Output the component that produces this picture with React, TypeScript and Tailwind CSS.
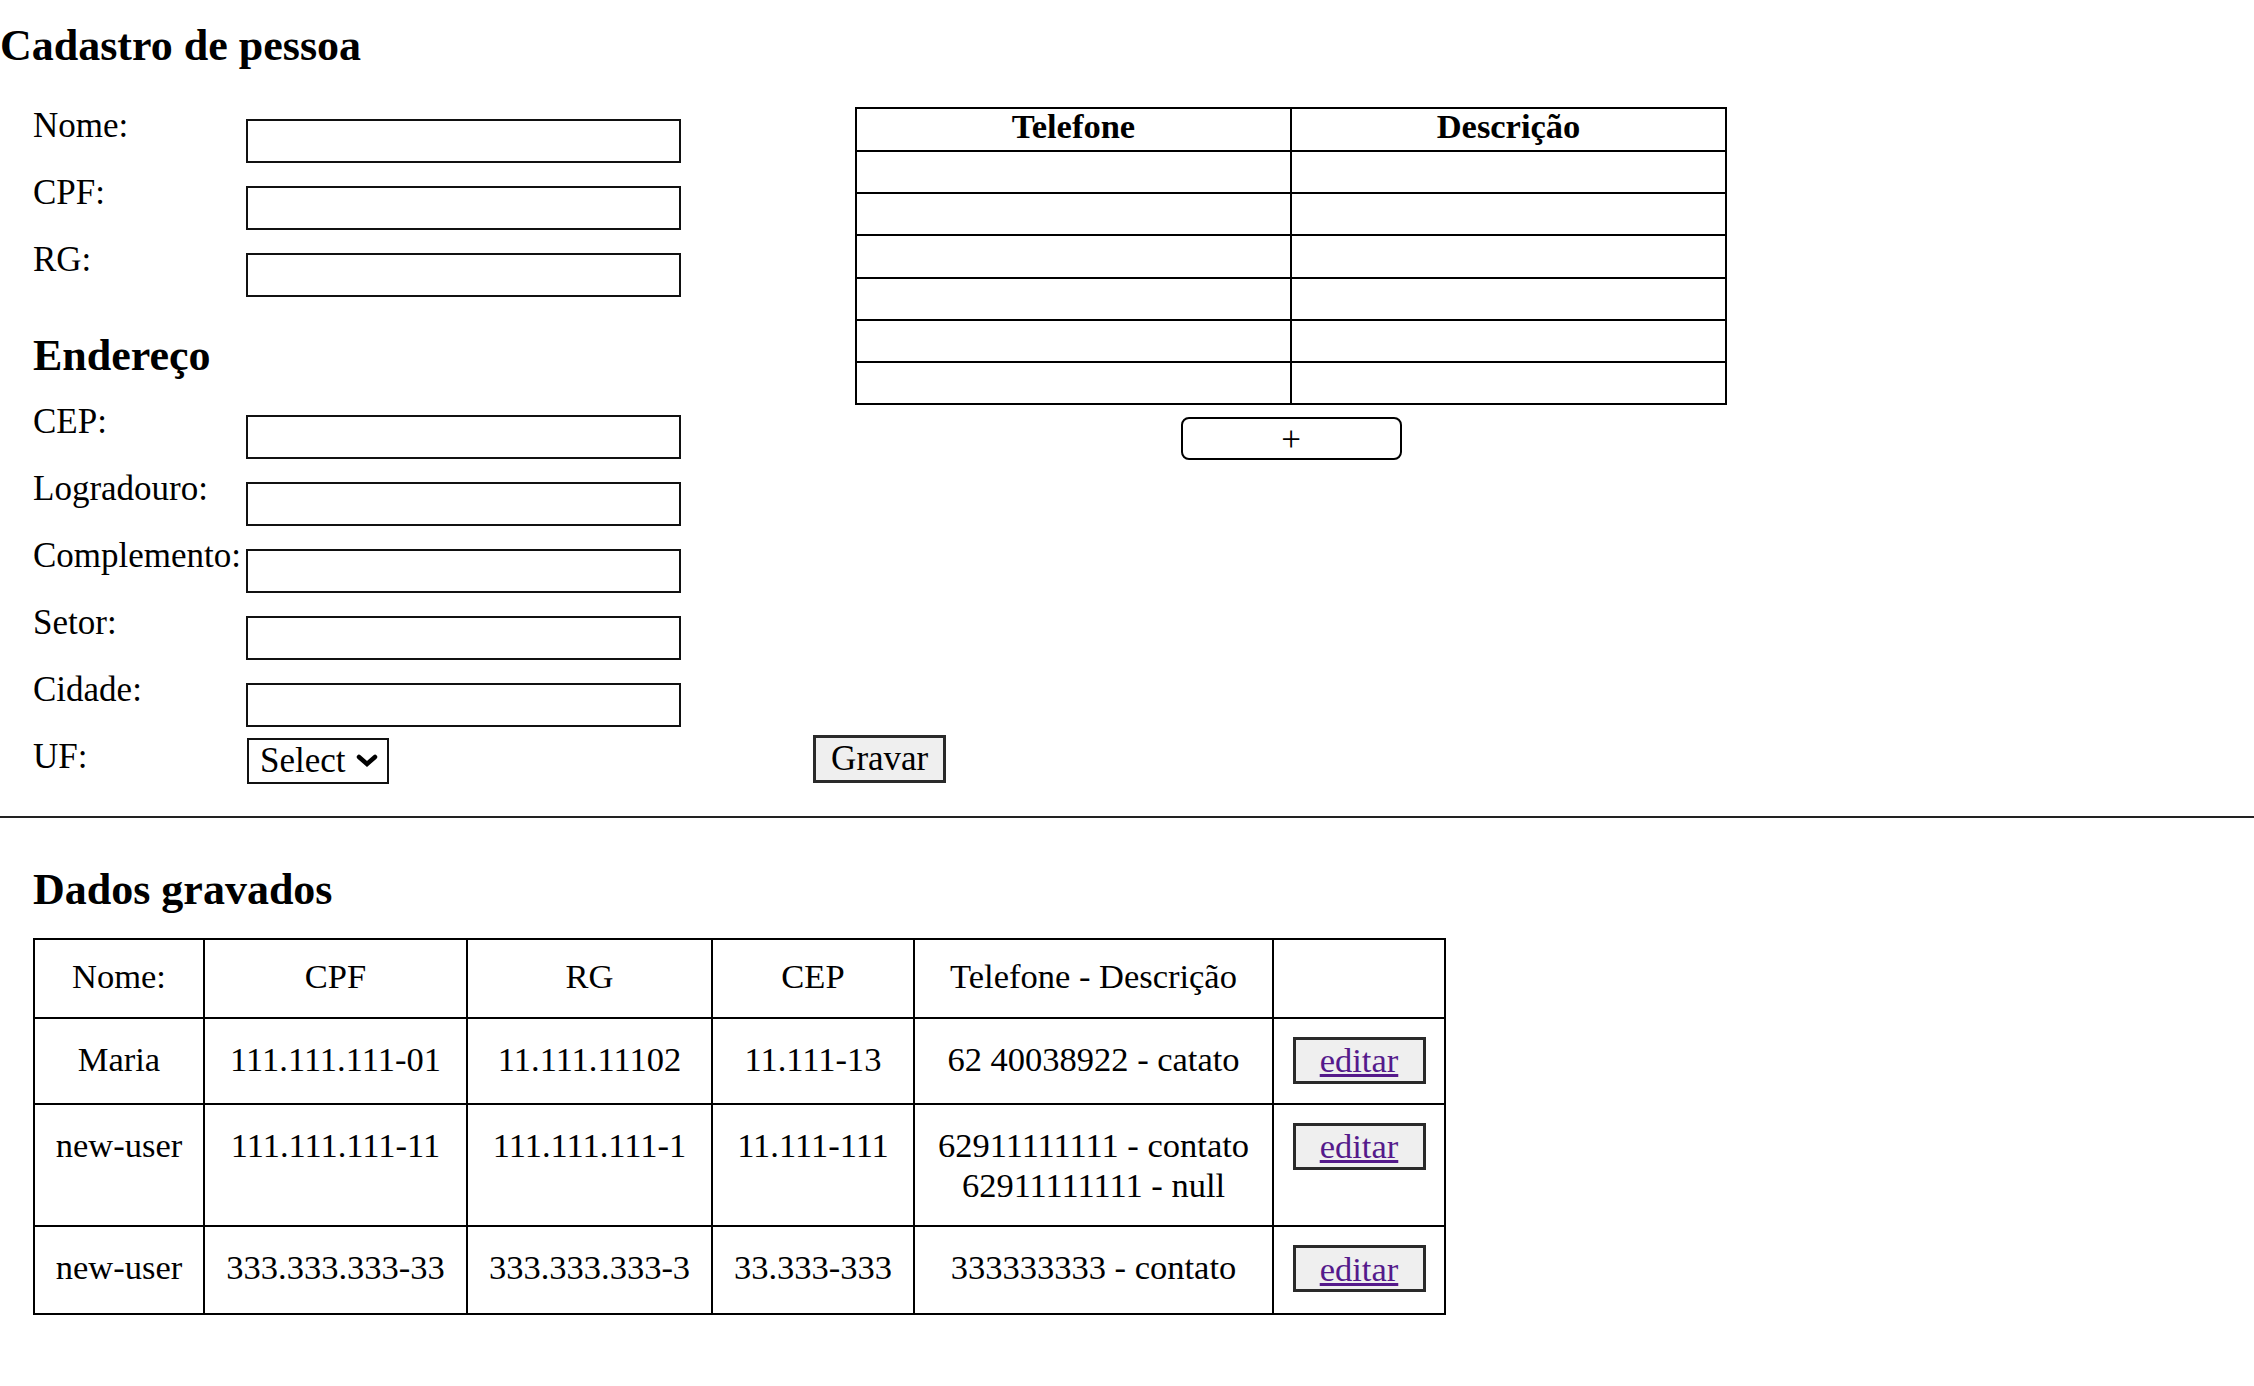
import React from "react";

const topFields = ["Nome:", "CPF:", "RG:"];
const addrFields = ["CEP:", "Logradouro:", "Complemento:", "Setor:", "Cidade:"];

function FieldRow({ label }: { label: string }) {
  return (
    <div className="flex h-[57px] items-start">
      <label className="mt-[0.5px] w-[213px] shrink-0 whitespace-nowrap text-[35px] leading-[40px]">{label}</label>
      <input
        type="text"
        className="mt-[13px] block h-[44px] w-[435px] border-2 border-[#111] bg-white outline-none"
      />
    </div>
  );
}

type Row = {
  nome: string;
  cpf: string;
  rg: string;
  cep: string;
  tel: string[];
  h: string;
};

const rows: Row[] = [
  { nome: "Maria", cpf: "111.111.111-01", rg: "11.111.11102", cep: "11.111-13", tel: ["62 40038922 - catato"], h: "h-[86.2px]" },
  {
    nome: "new-user",
    cpf: "111.111.111-11",
    rg: "111.111.111-1",
    cep: "11.111-111",
    tel: ["62911111111 - contato", "62911111111 - null"],
    h: "h-[122.3px]",
  },
  { nome: "new-user", cpf: "333.333.333-33", rg: "333.333.333-3", cep: "33.333-333", tel: ["333333333 - contato"], h: "h-[87.5px]" },
];

const gridCols = "grid grid-cols-[170px_263px_245px_202px_359px_172px]";
const cellBase = "border-r-2 border-b-2 border-black text-center text-[34.5px] leading-[39.6px] whitespace-nowrap";

export default function App() {
  return (
    <div className="min-h-screen bg-white text-black font-['Liberation_Serif',serif]">
      <h2 className="mt-[21px] text-[44px] font-bold leading-[50px]">Cadastro de pessoa</h2>

      <div className="pl-[33px]">
        <div className="mt-[34.5px] flex items-start">
          {/* Left form column */}
          <div className="w-[648px] shrink-0">
            <div className="flex flex-col gap-[10px]">
              {topFields.map((f) => (
                <FieldRow key={f} label={f} />
              ))}
            </div>
            <h3 className="mt-[34px] text-[44px] font-bold leading-[50px]">Endereço</h3>
            <div className="mt-[21px] flex flex-col gap-[10px]">
              {addrFields.map((f) => (
                <FieldRow key={f} label={f} />
              ))}
            </div>
          </div>

          {/* Right phone column */}
          <div className="ml-[174px] mt-[1.5px] flex flex-col items-center">
            <div className="w-fit border-l-2 border-t-2 border-black">
              <div className="grid grid-cols-[435px_435px]">
                <div className="flex h-[43px] items-start justify-center border-r-2 border-b-2 border-black text-[34.5px] font-bold leading-[34px]">
                  Telefone
                </div>
                <div className="flex h-[43px] items-start justify-center border-r-2 border-b-2 border-black text-[34.5px] font-bold leading-[34px]">
                  Descrição
                </div>
                {[0, 1, 2, 3, 4, 5].map((i) => (
                  <React.Fragment key={i}>
                    <div className="h-[42.2px] border-r-2 border-b-2 border-black" />
                    <div className="h-[42.2px] border-r-2 border-b-2 border-black" />
                  </React.Fragment>
                ))}
              </div>
            </div>
            <button
              type="button"
              className="mt-[12.3px] flex h-[42.7px] w-[221px] items-center justify-center rounded-[8px] border-2 border-black bg-white pt-[3px]"
            >
              <span className="text-[35px] leading-[30px]">+</span>
            </button>
          </div>
        </div>

        {/* UF row */}
        <div className="mt-[8.5px] flex items-start">
          <span className="mt-[2px] w-[213px] shrink-0 text-[35px] leading-[40px]">UF:</span>
          <div className="ml-[1px] mt-[3px] flex h-[45.6px] w-[142px] items-center justify-between border-2 border-[#111] bg-white pl-[11px] pr-[9px]">
            <span className="text-[35px] leading-[40px]">Select</span>
            <svg width="22" height="13" viewBox="0 0 22 13" className="block">
              <polyline points="3,3 11,10 19,3" fill="none" stroke="#000" strokeWidth="4.5" strokeLinecap="round" strokeLinejoin="miter" />
            </svg>
          </div>
          <button
            type="button"
            className="ml-[424px] flex h-[48.3px] w-[133.4px] items-center justify-center border-[3px] border-[#2a2a2a] bg-[#efefef] text-[35px] leading-[40px]"
          >
            Gravar
          </button>
        </div>
      </div>

      <hr className="mt-[32.7px] h-[2px] border-0 bg-[#222]" />

      <div className="pl-[33px]">
        <h2 className="mt-[47px] text-[44px] font-bold leading-[50px]">Dados gravados</h2>
        <div className="mt-[23px] w-fit border-l-2 border-t-2 border-black">
          <div className={gridCols}>
            {["Nome:", "CPF", "RG", "CEP", "Telefone - Descrição", ""].map((h, i) => (
              <div key={i} className={`${cellBase} h-[78.3px] pt-[17px]`}>
                {h}
              </div>
            ))}
          </div>
          {rows.map((r, idx) => (
            <div key={idx} className={gridCols}>
              <div className={`${cellBase} ${r.h} pt-[21.4px]`}>{r.nome}</div>
              <div className={`${cellBase} ${r.h} pt-[21.4px]`}>{r.cpf}</div>
              <div className={`${cellBase} ${r.h} pt-[21.4px]`}>{r.rg}</div>
              <div className={`${cellBase} ${r.h} pt-[21.4px]`}>{r.cep}</div>
              <div className={`${cellBase} ${r.h} pt-[21.4px]`}>
                {r.tel.map((t, j) => (
                  <div key={j}>{t}</div>
                ))}
              </div>
              <div className={`${cellBase} ${r.h} flex items-start justify-center pt-[18px]`}>
                <button
                  type="button"
                  className="flex h-[47.3px] w-[133px] items-center justify-center border-[3px] border-[#2a2a2a] bg-[#efefef] text-[34.5px] leading-[40px]"
                >
                  <a href="#" className="text-[#551a8b] underline" onClick={(e) => e.preventDefault()}>
                    editar
                  </a>
                </button>
              </div>
            </div>
          ))}
        </div>
      </div>
    </div>
  );
}
